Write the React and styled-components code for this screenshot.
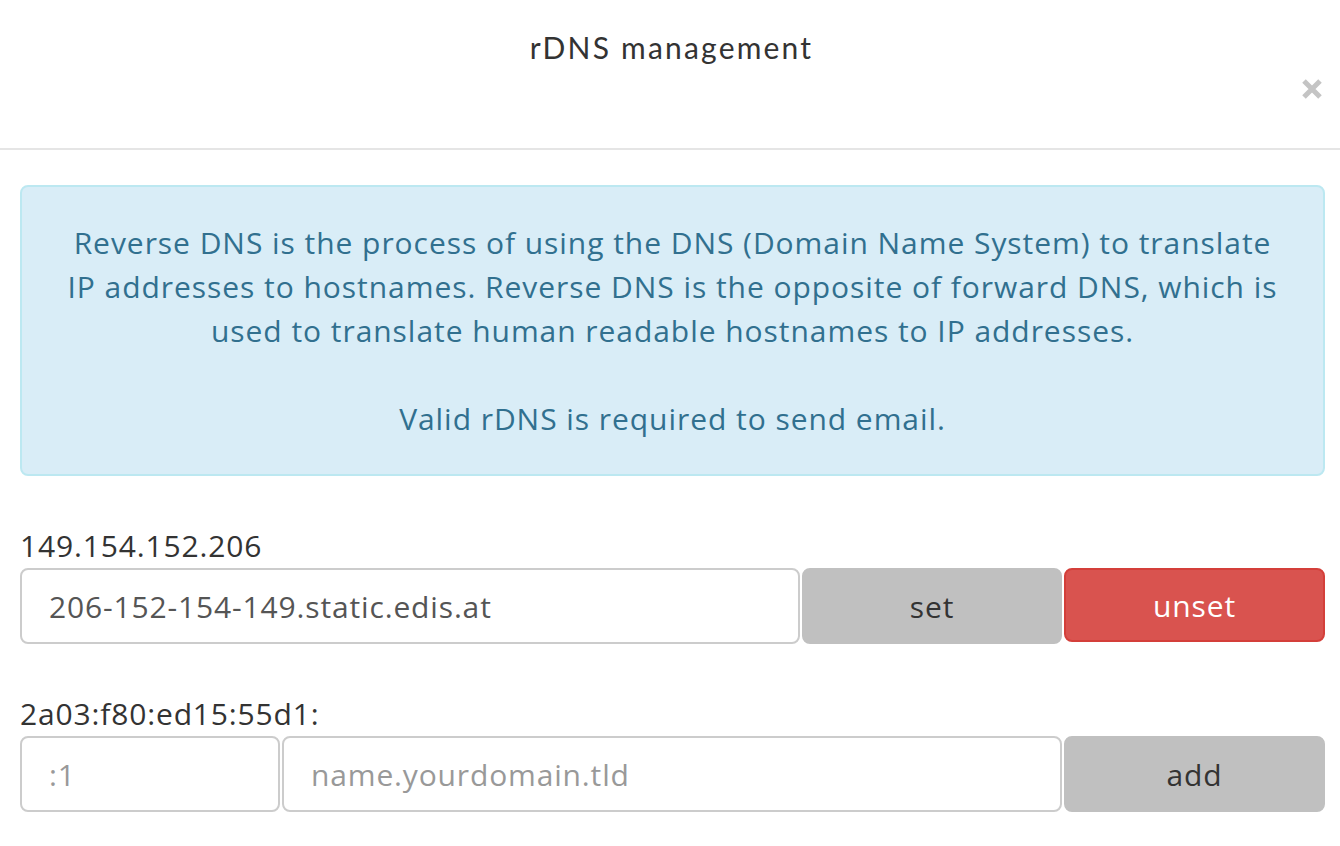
import React from "react";
import styled, { createGlobalStyle } from "styled-components";

const GlobalStyle = createGlobalStyle`
  html, body {
    margin: 0;
    padding: 0;
    background: #fff;
  }
  body {
    font-family: "Open Sans", "Liberation Sans", sans-serif;
    color: #333;
  }
  * {
    box-sizing: border-box;
  }
`;

const Modal = styled.div`
  width: 1340px;
  min-height: 846px;
  background: #fff;
`;

const Header = styled.div`
  display: flex;
  flex-direction: column;
  padding: 27px 17px 0 20px;
  height: 150px;
  border-bottom: 2px solid #e5e5e5;
`;

const Title = styled.h4`
  margin: 0;
  text-align: center;
  font-family: "Lato", "Open Sans", sans-serif;
  font-weight: 400;
  font-size: 30px;
  letter-spacing: 2.2px;
  line-height: 40px;
  color: #333;
`;

const CloseButton = styled.button`
  align-self: flex-end;
  margin-top: 11px;
  padding: 0;
  width: 22px;
  height: 22px;
  border: none;
  background: none;
  cursor: pointer;
  display: flex;
`;

const Body = styled.div`
  padding: 35px 15px 30px 20px;
`;

const InfoBox = styled.div`
  background: #d9edf7;
  border: 2px solid #bce8f1;
  border-radius: 8px;
  color: #31708f;
  text-align: center;
  font-size: 30px;
  letter-spacing: 0.95px;
  line-height: 44px;
  padding: 34px 38px 33px;
`;

const Field = styled.div`
  margin-top: ${(p) => p.$top}px;
`;

const Label = styled.div`
  font-size: 30px;
  letter-spacing: 0.85px;
  line-height: 40px;
  color: #333;
  margin-bottom: 2px;
`;

const Row = styled.div`
  display: flex;
  gap: 2px;
  height: 76px;
`;

const Input = styled.input`
  flex: ${(p) => p.$flex};
  min-width: 0;
  height: 100%;
  border: 2px solid #ccc;
  border-radius: 8px;
  padding: 0 27px;
  font-family: "Open Sans", "Liberation Sans", sans-serif;
  font-size: 30px;
  letter-spacing: 0.85px;
  color: #555;
  background: #fff;
  outline: none;

  &::placeholder {
    color: #999;
  }
`;

const Button = styled.button`
  flex: 0 0 ${(p) => p.$width}px;
  height: ${(p) => (p.$danger ? 74 : 76)}px;
  border-radius: 8px;
  border: 2px solid ${(p) => (p.$danger ? "#d43f3a" : "#c0c0c0")};
  background: ${(p) => (p.$danger ? "#d9534f" : "#c0c0c0")};
  color: ${(p) => (p.$danger ? "#fff" : "#333")};
  font-family: "Open Sans", "Liberation Sans", sans-serif;
  font-size: 30px;
  letter-spacing: 0.85px;
  cursor: pointer;
`;

const CloseIcon = () => (
  <svg width="22" height="22" viewBox="0 0 22 22">
    <path
      d="M3 3 L19 19 M19 3 L3 19"
      stroke="#c4c4c4"
      strokeWidth="5"
      strokeLinecap="butt"
    />
  </svg>
);

export default function App() {
  return (
    <>
      <GlobalStyle />
      <Modal>
        <Header>
          <Title>rDNS management</Title>
          <CloseButton aria-label="Close">
            <CloseIcon />
          </CloseButton>
        </Header>
        <Body>
          <InfoBox>
            Reverse DNS is the process of using the DNS (Domain Name System) to
            translate IP addresses to hostnames. Reverse DNS is the opposite of
            forward DNS, which is used to translate human readable hostnames to
            IP addresses.
            <br />
            <br />
            Valid rDNS is required to send email.
          </InfoBox>

          <Field $top={50}>
            <Label>149.154.152.206</Label>
            <Row>
              <Input $flex="1" defaultValue="206-152-154-149.static.edis.at" />
              <Button $width={260}>set</Button>
              <Button $width={261} $danger>
                unset
              </Button>
            </Row>
          </Field>

          <Field $top={50}>
            <Label>2a03:f80:ed15:55d1:</Label>
            <Row>
              <Input $flex="0 0 260px" placeholder=":1" />
              <Input $flex="1" placeholder="name.yourdomain.tld" />
              <Button $width={261}>add</Button>
            </Row>
          </Field>
        </Body>
      </Modal>
    </>
  );
}
